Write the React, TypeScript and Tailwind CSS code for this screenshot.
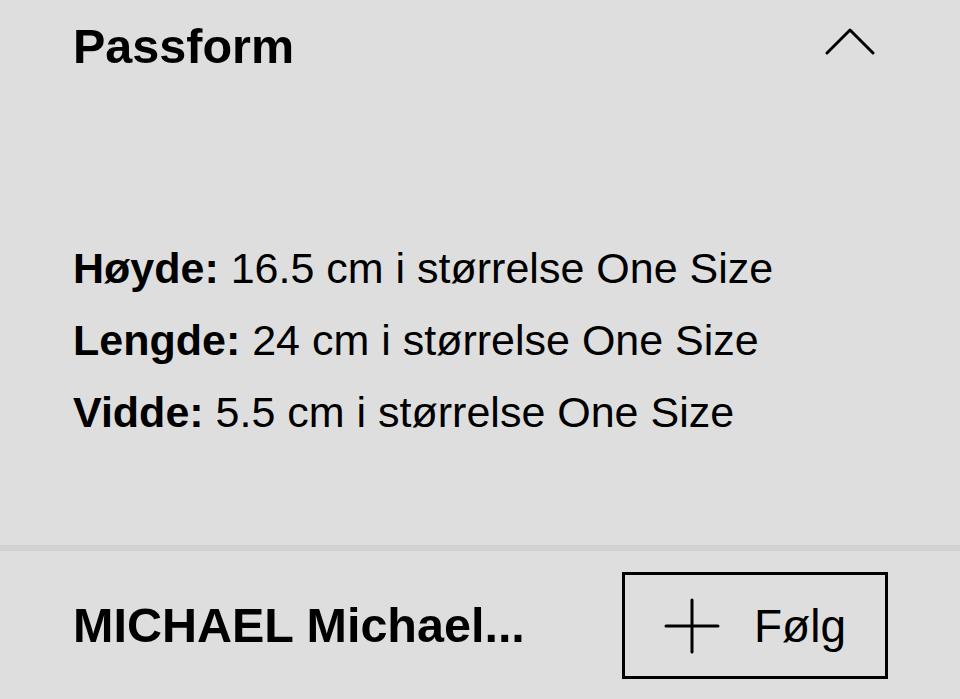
import React from 'react';

const rows = [
    { label: 'Høyde:', value: '16.5 cm i størrelse One Size' },
    { label: 'Lengde:', value: '24 cm i størrelse One Size' },
    { label: 'Vidde:', value: '5.5 cm i størrelse One Size' },
];

export default function App() {
    return (
        <div className="w-[960px] h-[699px] overflow-hidden bg-[#dedede] text-black font-['Liberation_Sans',Arial,sans-serif]">
            <section className="h-[545px] pl-[73px] pr-[85px]">
                <div className="flex items-center justify-between h-[92px]">
                    <h2 className="text-[48.5px] leading-none font-bold">Passform</h2>
                    <svg width="50" height="28" viewBox="0 0 50 28" fill="none" className="mb-[9px]">
                        <path d="M2 25 L25 2 L48 25" stroke="black" strokeWidth="3" strokeLinecap="round" strokeLinejoin="round" />
                    </svg>
                </div>
                <div className="mt-[140px] text-[43px] leading-[72px]">
                    {rows.map((row) => (
                        <p key={row.label}>
                            <span className="font-bold">{row.label}</span> {row.value}
                        </p>
                    ))}
                </div>
            </section>

            <div className="h-[6px] bg-[#d2d2d2]" />

            <div className="flex items-center justify-between pl-[73px] pr-[72px] pt-[21px]">
                <span className="text-[48.5px] font-bold leading-none">MICHAEL Michael...</span>
                <button className="w-[266px] h-[107px] border-[3px] border-black flex items-center justify-center gap-[34px]">
                    <svg width="56" height="56" viewBox="0 0 56 56" fill="none">
                        <path d="M28 2 V54 M2 28 H54" stroke="black" strokeWidth="3" strokeLinecap="round" />
                    </svg>
                    <span className="text-[46px] leading-none">Følg</span>
                </button>
            </div>
        </div>
    );
}
